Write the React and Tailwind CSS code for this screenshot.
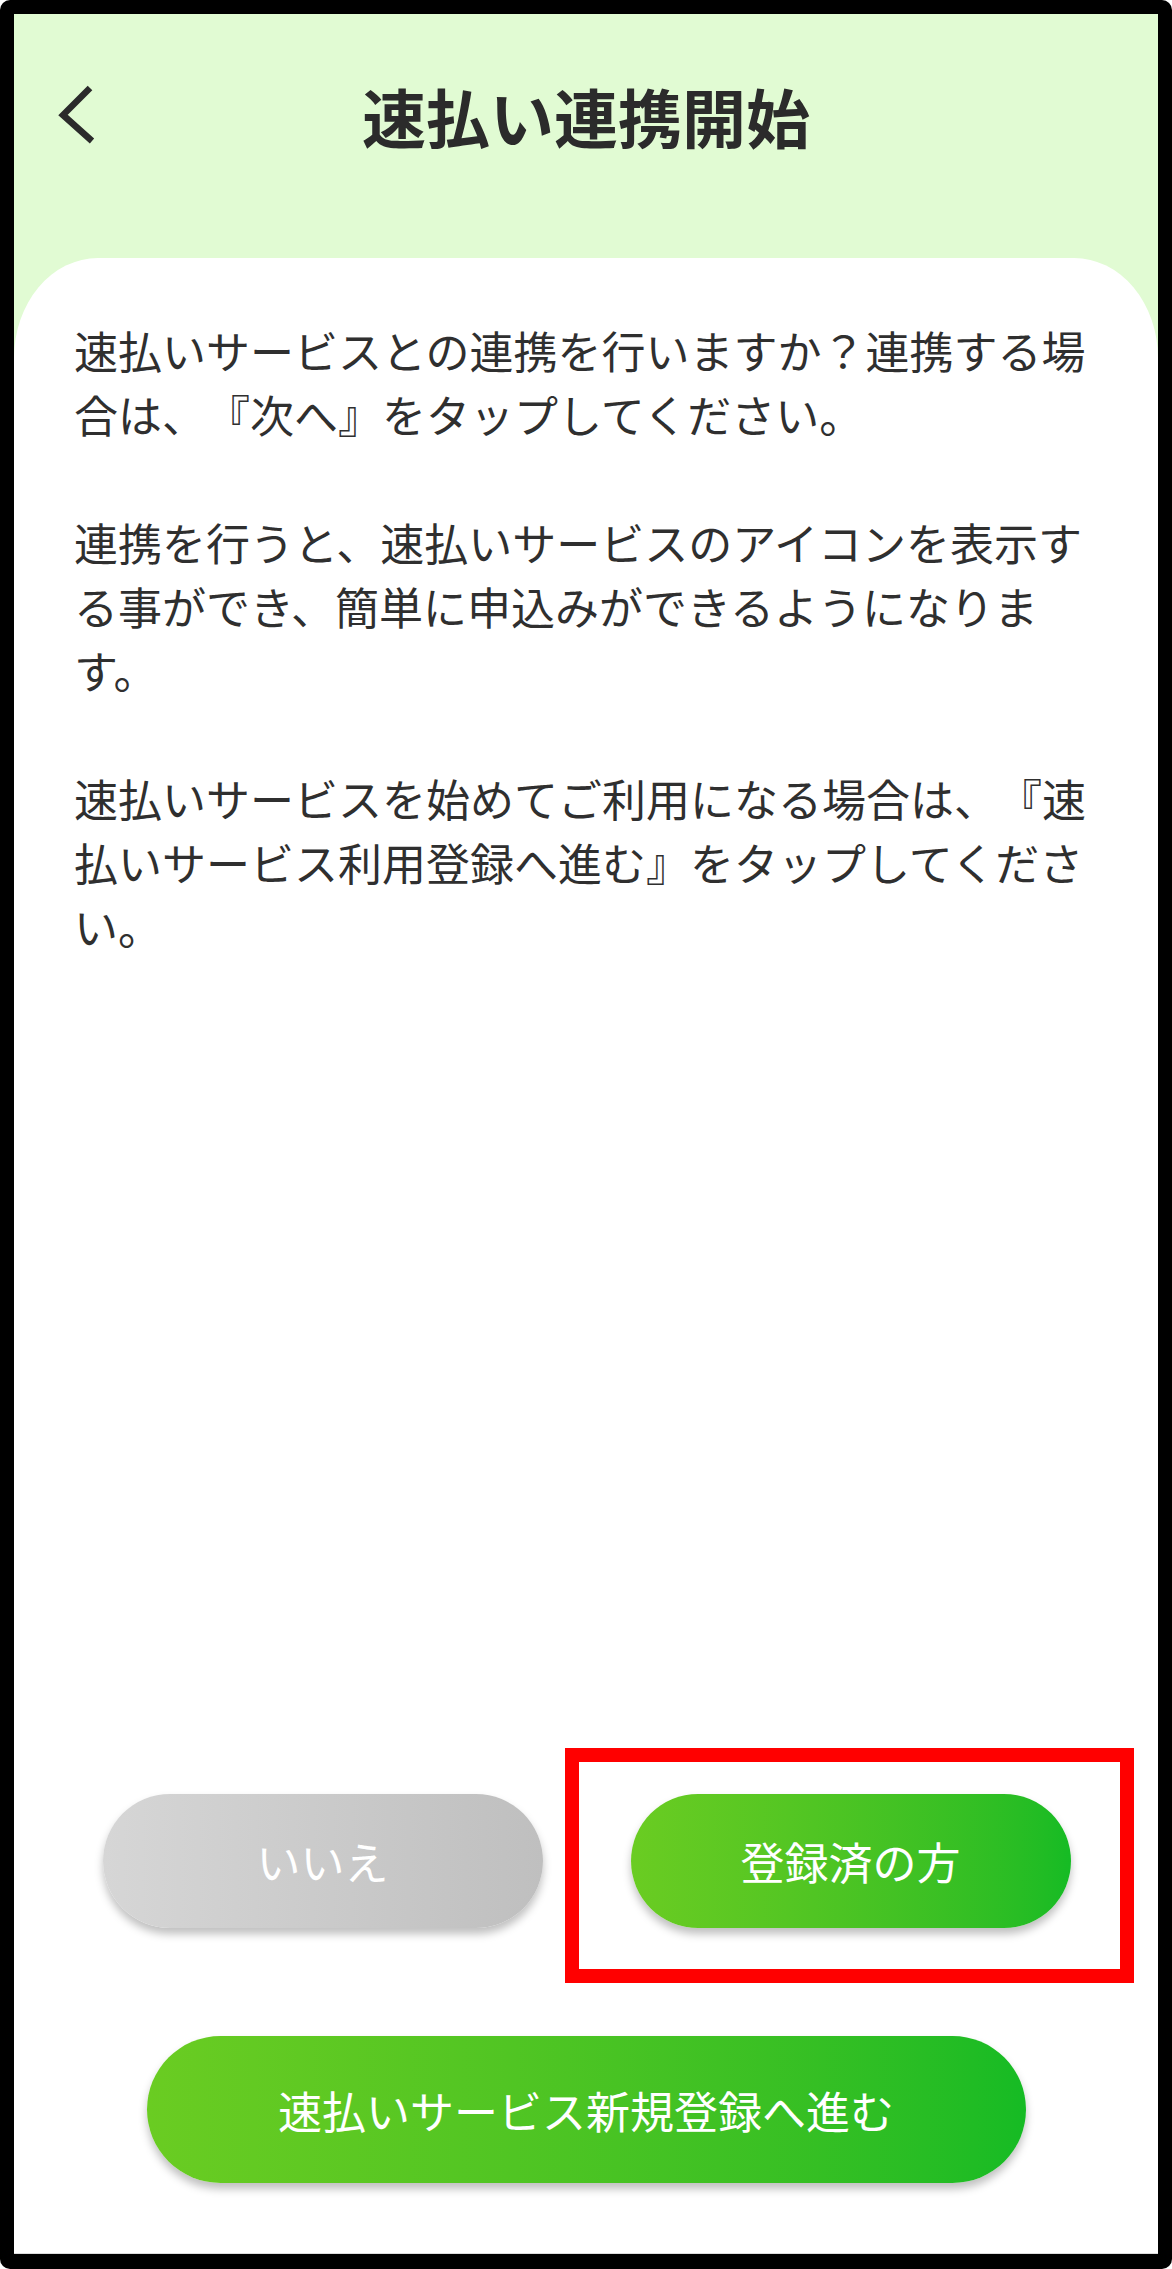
import React from 'react'

const paragraphs = [
  ['速払いサービスとの連携を行いますか？連携する場', '合は、『次へ』をタップしてください。'],
  ['連携を行うと、速払いサービスのアイコンを表示す', 'る事ができ、簡単に申込みができるようになりま', 'す。'],
  ['速払いサービスを始めてご利用になる場合は、『速', '払いサービス利用登録へ進む』をタップしてくださ', 'い。'],
]

function BackIcon() {
  return (
    <svg width="40" height="60" viewBox="0 0 40 60" fill="none">
      <polyline points="32,3 5,30 34,56" stroke="#2b2b2b" strokeWidth="6.5" strokeLinejoin="miter" />
    </svg>
  )
}

function PillButton({ children, gray, className = '' }) {
  const colors = gray
    ? 'from-[#d6d6d6] to-[#bfbfbf]'
    : 'from-[#6acc22] to-[#15bb24]'
  return (
    <button
      className={`flex items-center justify-center rounded-full bg-linear-to-r ${colors} text-white text-[44px] leading-none shadow-[0_6px_8px_rgba(0,0,0,0.25)] ${className}`}
    >
      {children}
    </button>
  )
}

export default function App() {
  return (
    <div className="w-[1172px] h-[2269px] bg-black rounded-[10px] pt-[14px] px-[14px] pb-[15px] font-['Noto_Sans_CJK_JP',sans-serif] [text-spacing-trim:space-all]">
      <div className="flex flex-col h-full bg-[#e1fbd3]">
        {/* header */}
        <div className="h-[244px] shrink-0 pt-[69px]">
          <div className="grid grid-cols-[1fr_auto_1fr] items-center h-[64px] px-[44px]">
            <div className="flex items-center">
              <BackIcon />
            </div>
            <h1 className="text-[64px] leading-[64px] font-bold text-[#2b2b2b]">速払い連携開始</h1>
            <div />
          </div>
        </div>

        {/* card */}
        <div className="flex-1 flex flex-col bg-white rounded-t-[84px_100px] border-b border-[#dcdcdc]">
          <div className="pt-[60px] pl-[60px] pr-[40px] text-[44px] leading-[64px] text-[#2f2f2f] flex flex-col gap-[64px]">
            {paragraphs.map((lines, i) => (
              <p key={i}>
                {lines.map((line, j) => (
                  <span key={j} className="block whitespace-nowrap">{line}</span>
                ))}
              </p>
            ))}
          </div>

          <div className="mt-auto pb-[70px] flex flex-col items-center">
            <div className="flex gap-[88px] pl-[1px]">
              <PillButton gray className="w-[440px] h-[134px]">いいえ</PillButton>
              <div className="relative">
                <PillButton className="w-[440px] h-[134px]">登録済の方</PillButton>
                <div className="absolute -left-[66px] -top-[46px] w-[569px] h-[235px] border-[14px] border-[#ff0000] pointer-events-none" />
              </div>
            </div>
            <PillButton className="mt-[108px] w-[879px] h-[147px]">速払いサービス新規登録へ進む</PillButton>
          </div>
        </div>
      </div>
    </div>
  )
}
